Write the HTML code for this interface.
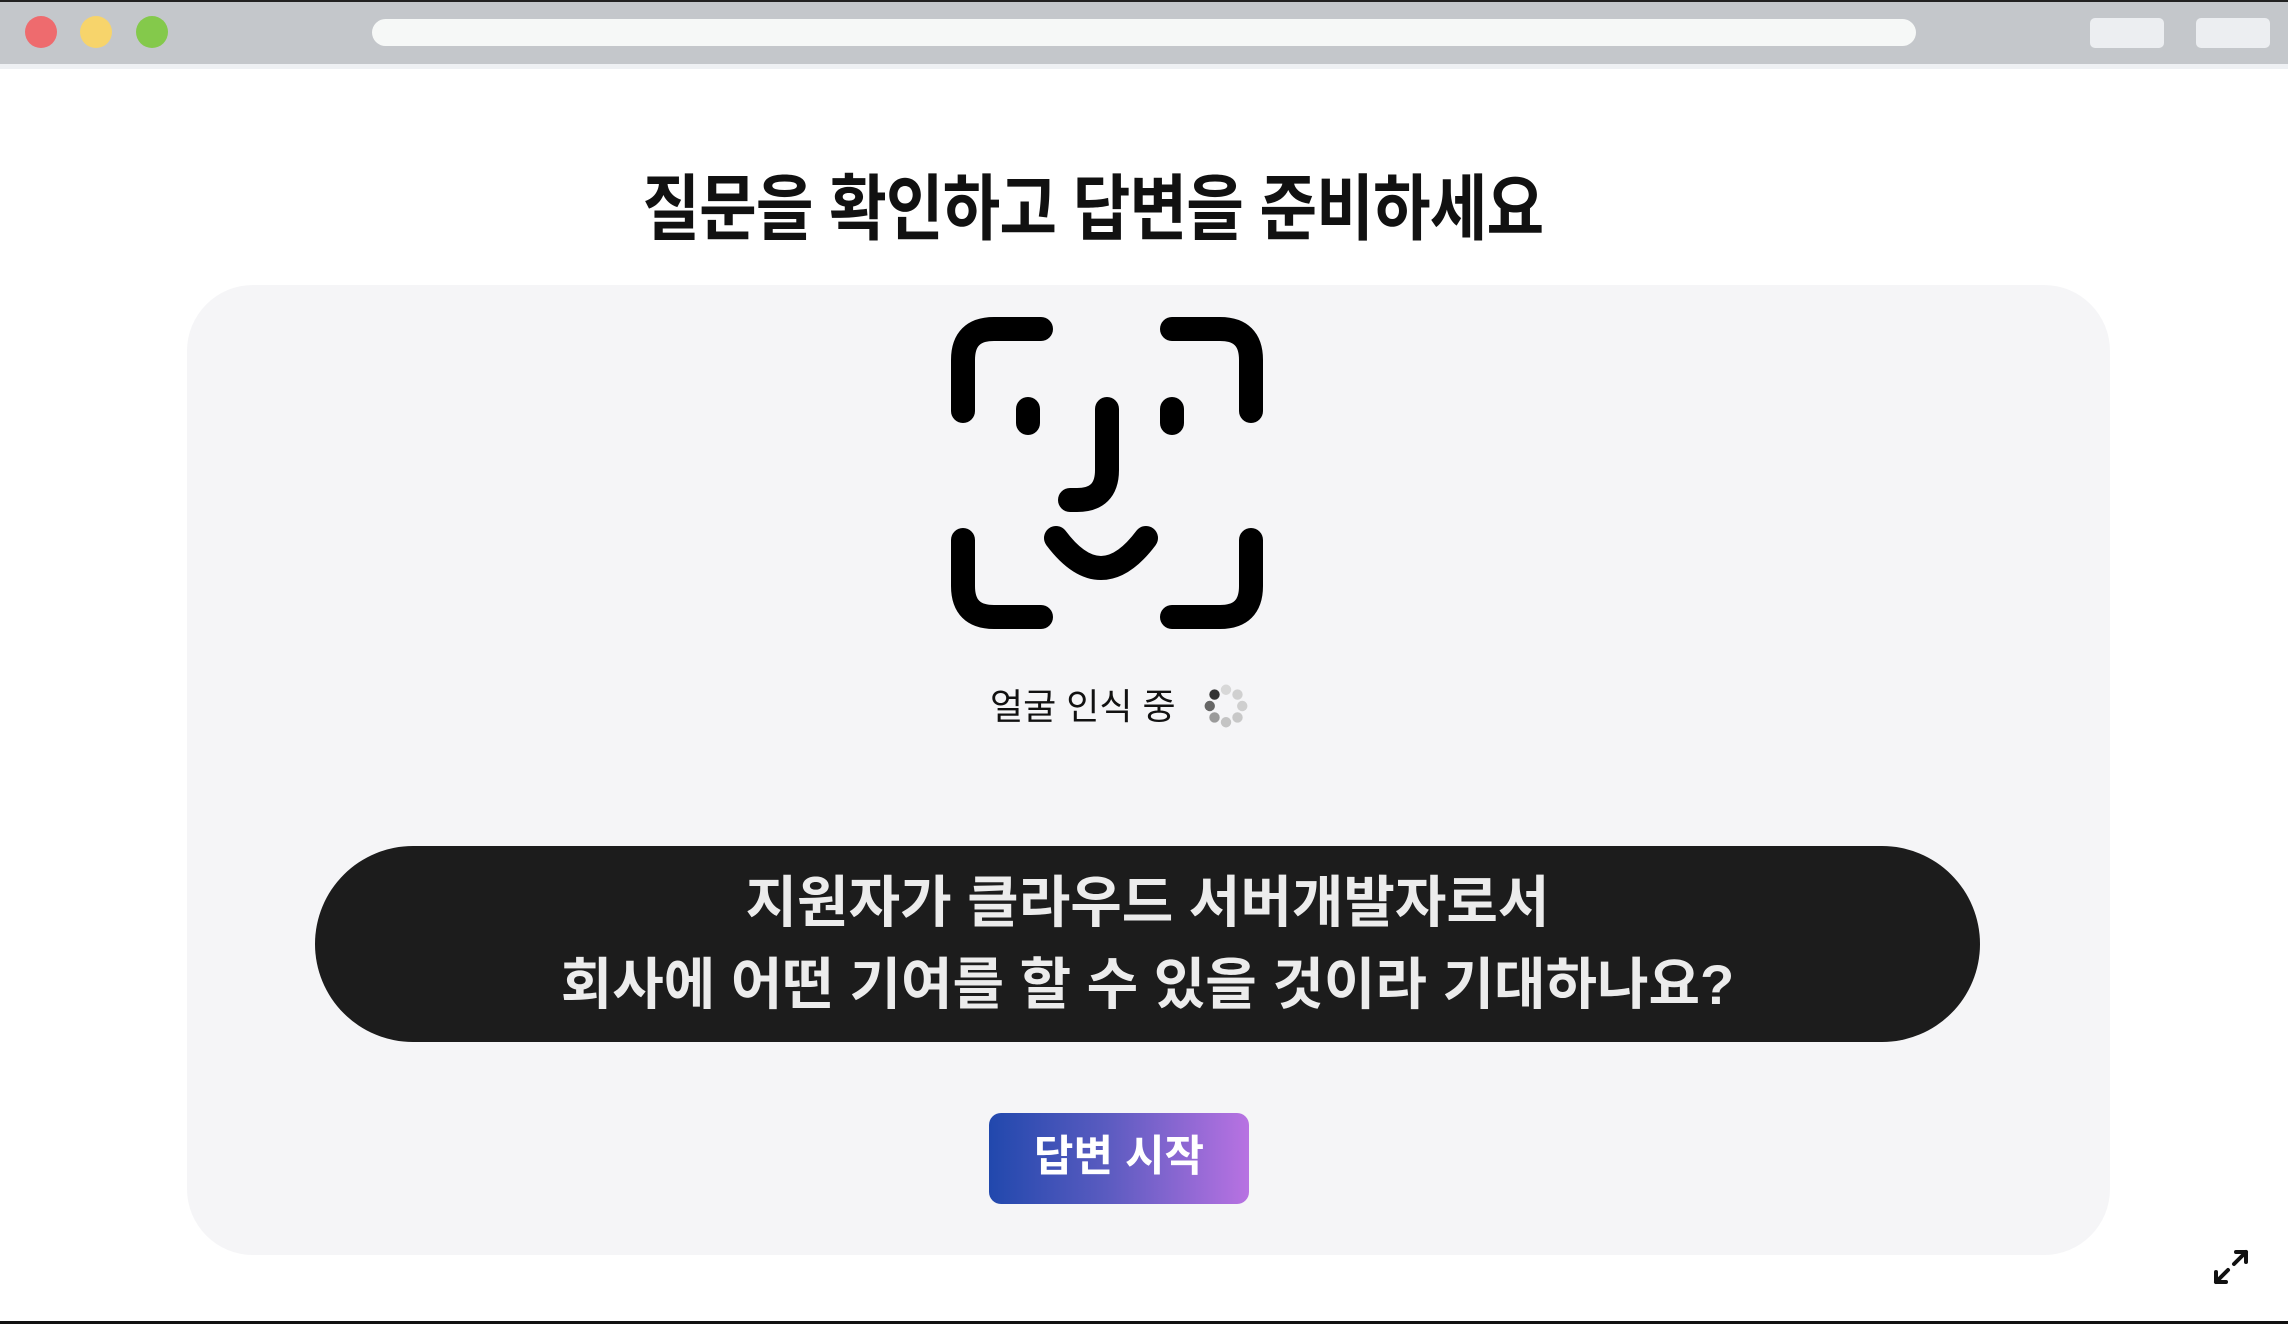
<!DOCTYPE html>
<html><head><meta charset="utf-8"><style>
html,body{margin:0;padding:0;width:2288px;height:1324px;overflow:hidden;background:#fff;font-family:"Liberation Sans","Noto Sans CJK KR",sans-serif;}
.bar{position:absolute;left:0;top:0;width:2288px;height:64px;background:#c4c7cb;border-top:2px solid #222;box-sizing:border-box;}
.strip{position:absolute;left:0;top:64px;width:2288px;height:5px;background:#eef0f3;}
.dot{position:absolute;top:16px;width:32px;height:32px;border-radius:50%;}
.url{position:absolute;left:372px;top:19px;width:1544px;height:27px;background:#f6f8f7;border-radius:14px;}
.btn{position:absolute;top:18px;width:74px;height:30px;background:#eceef1;border-radius:5px;}
.title{position:absolute;left:-51px;width:2288px;top:160px;text-align:center;font-size:72px;font-weight:bold;color:#111;line-height:100px;}
.title span{display:inline-block;transform:scaleX(0.87);letter-spacing:-1px;}
.card{position:absolute;left:187px;top:285px;width:1923px;height:970px;background:#f5f5f7;border-radius:66px;}
.label{position:absolute;left:990px;top:682px;font-size:36px;color:#111;line-height:50px;}
.pill{position:absolute;left:315px;top:846px;width:1665px;height:196px;background:#1c1c1c;border-radius:98px;color:#ececec;font-size:56px;font-weight:bold;text-align:center;line-height:82px;padding-top:16px;box-sizing:border-box;}
.go{position:absolute;left:989px;top:1113px;width:260px;height:91px;border-radius:12px;background:linear-gradient(90deg,#2148ad,#5a5bc0 45%,#b872e2);color:#fff;font-size:43px;font-weight:bold;text-align:center;line-height:88px;}
.bottom{position:absolute;left:0;top:1321px;width:2288px;height:3px;background:#111;}
</style></head><body>
<div class="bar"></div><div class="strip"></div>
<div class="dot" style="left:25px;background:#ee6b6e"></div>
<div class="dot" style="left:80px;background:#f7d46b"></div>
<div class="dot" style="left:136px;background:#84c94b"></div>
<div class="url"></div>
<div class="btn" style="left:2090px"></div>
<div class="btn" style="left:2196px"></div>
<div class="title"><span>질문을 확인하고 답변을 준비하세요</span></div>
<div class="card"></div>
<svg style="position:absolute;left:900px;top:280px" width="400" height="460" viewBox="0 0 400 460">
<g fill="none" stroke="#000" stroke-width="24" stroke-linecap="round">
<path d="M63 131V80Q63 49 94 49H141"/>
<path d="M272 49H320Q351 49 351 80V131"/>
<path d="M63 260V306Q63 337 94 337H141"/>
<path d="M351 260V306Q351 337 320 337H272"/>
<path d="M128 129V143"/><path d="M272 129V143"/>
<path d="M207 129V190Q207 220 177 220H170"/>
<path d="M156 258Q201 318 246 258"/>
</g></svg>
<div class="label">얼굴 인식 중</div>
<svg style="position:absolute;left:1200px;top:680px" width="52" height="52" viewBox="0 0 48 48">
<circle cx="24" cy="9" r="4.8" fill="#d8d8d8"/>
<circle cx="34.6" cy="13.4" r="4.8" fill="#d0d0d0"/>
<circle cx="39" cy="24" r="4.8" fill="#cfcfcf"/>
<circle cx="34.6" cy="34.6" r="4.8" fill="#c8c8c8"/>
<circle cx="24" cy="39" r="4.8" fill="#c4c4c4"/>
<circle cx="13.4" cy="34.6" r="4.8" fill="#9a9a9a"/>
<circle cx="9" cy="24" r="4.8" fill="#666"/>
<circle cx="13.4" cy="13.4" r="4.8" fill="#333"/>
</svg>
<div class="pill">지원자가 클라우드 서버개발자로서<br>회사에 어떤 기여를 할 수 있을 것이라 기대하나요?</div>
<div class="go">답변 시작</div>
<svg style="position:absolute;left:2208px;top:1244px" width="46" height="46" viewBox="0 0 46 46">
<g fill="none" stroke="#111" stroke-width="4" stroke-linecap="round" stroke-linejoin="round">
<path d="M8 38L20 26"/><path d="M8 28V38H18"/>
<path d="M38 8L26 20"/><path d="M28 8H38V18"/>
</g></svg>
<div class="bottom"></div>
</body></html>
